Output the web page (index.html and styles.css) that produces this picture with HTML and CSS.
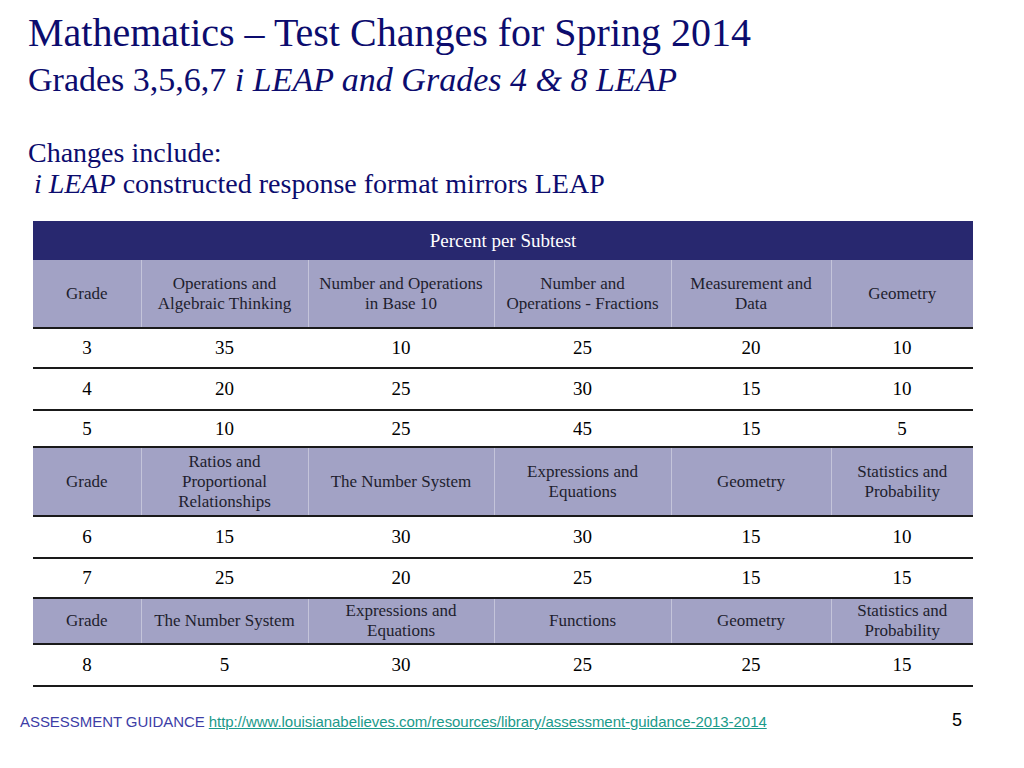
FILE: index.html
```html
<!DOCTYPE html>
<html>
<head>
<meta charset="utf-8">
<link rel="stylesheet" href="styles.css">
</head>
<body>
<div class="slide">
  <h1 class="title">Mathematics – Test Changes for Spring 2014</h1>
  <h2 class="subtitle">Grades 3,5,6,7 <i>i LEAP and Grades 4 &amp; 8 LEAP</i></h2>
  <div class="changes">
    <p class="line1">Changes include:</p>
    <p class="line2"><i>i LEAP</i> constructed response format mirrors LEAP</p>
  </div>
  <table class="grid">
    <colgroup>
      <col class="c1"><col class="c2"><col class="c3"><col class="c4"><col class="c5"><col class="c6">
    </colgroup>
    <tr class="top"><td colspan="6">Percent per Subtest</td></tr>
    <tr class="sub s1">
      <td>Grade</td><td>Operations and<br>Algebraic Thinking</td><td>Number and Operations<br>in Base 10</td><td>Number and<br>Operations - Fractions</td><td>Measurement and<br>Data</td><td>Geometry</td>
    </tr>
    <tr class="data d3"><td>3</td><td>35</td><td>10</td><td>25</td><td>20</td><td>10</td></tr>
    <tr class="data d4"><td>4</td><td>20</td><td>25</td><td>30</td><td>15</td><td>10</td></tr>
    <tr class="data d5 nob"><td>5</td><td>10</td><td>25</td><td>45</td><td>15</td><td>5</td></tr>
    <tr class="sub s2">
      <td>Grade</td><td>Ratios and<br>Proportional<br>Relationships</td><td>The Number System</td><td>Expressions and<br>Equations</td><td>Geometry</td><td>Statistics and<br>Probability</td>
    </tr>
    <tr class="data d6"><td>6</td><td>15</td><td>30</td><td>30</td><td>15</td><td>10</td></tr>
    <tr class="data d7 nob"><td>7</td><td>25</td><td>20</td><td>25</td><td>15</td><td>15</td></tr>
    <tr class="sub s3">
      <td>Grade</td><td>The Number System</td><td>Expressions and<br>Equations</td><td>Functions</td><td>Geometry</td><td>Statistics and<br>Probability</td>
    </tr>
    <tr class="data d8"><td>8</td><td>5</td><td>30</td><td>25</td><td>25</td><td>15</td></tr>
  </table>
  <div class="footer">
    <span class="guide">ASSESSMENT GUIDANCE <a href="#">http://www.louisianabelieves.com/resources/library/assessment-guidance-2013-2014</a></span>
    <span class="page">5</span>
  </div>
</div>
</body>
</html>
```
FILE: styles.css
```css
html, body {
  margin: 0;
  padding: 0;
  background: #ffffff;
}
.slide {
  width: 1024px;
  height: 768px;
  position: relative;
  font-family: "Liberation Serif", "Times New Roman", serif;
  color: #0c0c6e;
  overflow: hidden;
}
.title {
  margin: 0;
  padding: 10px 0 0 28px;
  font-size: 40px;
  font-weight: normal;
  line-height: 46px;
  white-space: nowrap;
}
.subtitle {
  margin: 2px 0 0 0;
  padding: 0 0 0 28px;
  font-size: 34px;
  font-weight: normal;
  line-height: 44px;
  white-space: nowrap;
}
.changes {
  margin-top: 35px;
  padding-left: 28px;
  font-size: 28px;
  line-height: 31px;
  white-space: nowrap;
}
.changes p { margin: 0; }
.changes .line2 { padding-left: 6px; }
.grid {
  margin: 22px 0 0 33px;
  width: 940px;
  border-collapse: collapse;
  table-layout: fixed;
  color: #000;
}
.c1 { width: 108px; }
.c2 { width: 167px; }
.c3 { width: 186px; }
.c4 { width: 177px; }
.c5 { width: 160px; }
.c6 { width: 142px; }
.grid td {
  text-align: center;
  vertical-align: middle;
  padding: 0;
  line-height: 20px;
}
.top td {
  background: #28286f;
  color: #ffffff;
  height: 39px;
  font-size: 19px;
}
.sub td {
  background: #a2a2c5;
  color: #1e1e2e;
  border-left: 1px solid #c4c4da;
  border-bottom: 2px solid #1a1a1a;
  font-size: 17px;
}
.sub td:first-child { border-left: none; }
.s1 td { height: 67px; }
.s2 td { height: 67px; border-top: 2px solid #1a1a1a; }
.s3 td { height: 44px; border-top: 2px solid #1a1a1a; }
.data td {
  font-size: 19px;
  border-bottom: 2px solid #1a1a1a;
}
.data.nob td { border-bottom: none; }
.d3 td { height: 38px; }
.d4 td { height: 40px; }
.d5 td { height: 35px; }
.d6 td { height: 40px; }
.d7 td { height: 38px; }
.d8 td { height: 40px; }
.footer {
  position: absolute;
  left: 20px;
  right: 0;
  top: 710px;
  display: flex;
  align-items: flex-start;
  font-family: "Liberation Sans", Arial, sans-serif;
}
.guide {
  font-size: 15px;
  color: #3d3da6;
  margin-top: 3px;
  letter-spacing: -0.05px;
}
.guide a {
  color: #1b9a8a;
  text-decoration: underline;
}
.page {
  margin-left: auto;
  margin-right: 62px;
  font-size: 18px;
  color: #000;
}
```
